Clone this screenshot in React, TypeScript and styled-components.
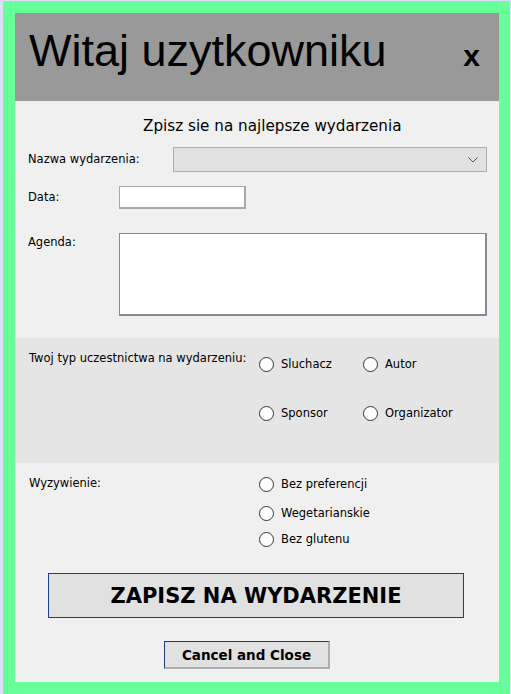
import React from "react";
import styled, { createGlobalStyle } from "styled-components";

const GlobalStyle = createGlobalStyle`
  html, body { margin: 0; padding: 0; }
  body {
    background: #dedef6;
    font-family: "DejaVu Sans", Verdana, sans-serif;
    font-size: 11.5px;
    color: #000;
    overflow: hidden;
  }
`;

const Frame = styled.div`
  margin: 1px 1px 0 3px;
  padding: 12px 11px 12px 12px;
  background: #66ff99;
`;

const Panel = styled.div`
  width: 484px;
  background: #f0f0f0;
  display: flex;
  flex-direction: column;
`;

const Header = styled.header`
  box-sizing: border-box;
  height: 88px;
  padding: 15px 19px 0 14px;
  background: #999999;
  display: flex;
  align-items: baseline;
  justify-content: space-between;
`;

const Title = styled.h1`
  margin: 0;
  font-family: "Liberation Sans", Arial, sans-serif;
  font-weight: 400;
  font-size: 45px;
  line-height: 46px;
  color: #000;
`;

const CloseX = styled.span`
  font-family: "Liberation Sans", Arial, sans-serif;
  font-weight: 700;
  font-size: 30px;
  color: #000;
  cursor: pointer;
`;

const Subtitle = styled.h2`
  margin: 16px 0 0 128px;
  height: 18px;
  font-family: "DejaVu Sans", Verdana, sans-serif;
  font-weight: 400;
  font-size: 15.2px;
  line-height: 18px;
  white-space: nowrap;
`;

const FieldRow = styled.div<{ $mt: number; $top?: boolean }>`
  margin-top: ${(p) => p.$mt}px;
  padding-left: 13px;
  display: flex;
  align-items: ${(p) => (p.$top ? "flex-start" : "center")};
`;

const Label = styled.label<{ $w: number; $pt?: number }>`
  width: ${(p) => p.$w}px;
  flex: none;
  padding-top: ${(p) => p.$pt ?? 0}px;
  line-height: 13px;
  white-space: nowrap;
`;

const Combo = styled.div`
  box-sizing: border-box;
  width: 314px;
  height: 25px;
  background: #e1e1e1;
  border: 1px solid #adadad;
  display: flex;
  align-items: center;
  justify-content: flex-end;
  padding-right: 8px;
`;

const TextInput = styled.div<{ $w: number; $h: number; $border: string }>`
  box-sizing: border-box;
  width: ${(p) => p.$w}px;
  height: ${(p) => p.$h}px;
  background: #ffffff;
  border: 1px solid ${(p) => p.$border};
  border-right-width: 2px;
  border-bottom-width: 2px;
`;

const ShadedSection = styled.section`
  margin-top: 22px;
  box-sizing: border-box;
  height: 125px;
  padding: 14px 0 0 14px;
  background: #e5e5e5;
  display: flex;
  align-items: flex-start;
`;

const PlainSection = styled.section`
  box-sizing: border-box;
  padding: 14px 0 0 14px;
  display: flex;
  align-items: flex-start;
`;

const SectionLabel = styled.div`
  width: 230px;
  flex: none;
  line-height: 13px;
  white-space: nowrap;
`;

const RadioGrid = styled.div`
  padding-top: 5px;
  display: grid;
  grid-template-columns: 104px auto;
  grid-auto-rows: 15px;
  align-content: start;
  row-gap: 34px;
`;

const RadioList = styled.div`
  display: flex;
  flex-direction: column;
`;

const Option = styled.label<{ $mt?: number }>`
  margin-top: ${(p) => p.$mt ?? 0}px;
  height: 15px;
  display: flex;
  align-items: center;
  gap: 7px;
  line-height: 15px;
  white-space: nowrap;
`;

const Circle = styled.span`
  box-sizing: border-box;
  width: 15px;
  height: 15px;
  border-radius: 50%;
  border: 1px solid #333333;
  background: #ffffff;
  flex: none;
`;

const Actions = styled.div`
  margin-top: 26px;
  padding-bottom: 13px;
  display: flex;
  flex-direction: column;
  align-items: flex-start;
`;

const PrimaryButton = styled.button`
  box-sizing: border-box;
  margin-left: 33px;
  width: 416px;
  height: 45px;
  background: #e1e1e1;
  border: 1px solid #1e3c8c;
  font-family: "DejaVu Sans", Verdana, sans-serif;
  font-weight: 700;
  font-size: 21px;
  color: #000;
  padding: 0;
`;

const SecondaryButton = styled.button`
  box-sizing: border-box;
  margin: 23px 0 0 149px;
  width: 166px;
  height: 28px;
  background: #e1e1e1;
  border-style: solid;
  border-width: 1px 2px 2px 1px;
  border-color: #1e3c7a #adadad #adadad #1e3c7a;
  font-family: "DejaVu Sans", Verdana, sans-serif;
  font-weight: 700;
  font-size: 13.5px;
  color: #000;
  padding: 0;
`;

const Chevron = () => (
  <svg width="10" height="6" viewBox="0 0 10 6">
    <polyline points="0.5,0.5 5,5 9.5,0.5" fill="none" stroke="#555" strokeWidth="1" />
  </svg>
);

const Radio = ({ label, mt }: { label: string; mt?: number }) => (
  <Option $mt={mt}>
    <Circle />
    {label}
  </Option>
);

export default function App() {
  return (
    <>
      <GlobalStyle />
      <Frame>
        <Panel>
          <Header>
            <Title>Witaj uzytkowniku</Title>
            <CloseX>x</CloseX>
          </Header>
          <Subtitle>Zpisz sie na najlepsze wydarzenia</Subtitle>
          <FieldRow $mt={12}>
            <Label $w={145}>Nazwa wydarzenia:</Label>
            <Combo>
              <Chevron />
            </Combo>
          </FieldRow>
          <FieldRow $mt={14}>
            <Label $w={91}>Data:</Label>
            <TextInput $w={127} $h={23} $border="#a8a8a8" />
          </FieldRow>
          <FieldRow $mt={24} $top>
            <Label $w={91} $pt={3}>Agenda:</Label>
            <TextInput $w={368} $h={83} $border="#868a94" />
          </FieldRow>
          <ShadedSection>
            <SectionLabel>Twoj typ uczestnictwa na wydarzeniu:</SectionLabel>
            <RadioGrid>
              <Radio label="Sluchacz" />
              <Radio label="Autor" />
              <Radio label="Sponsor" />
              <Radio label="Organizator" />
            </RadioGrid>
          </ShadedSection>
          <PlainSection>
            <SectionLabel>Wyzywienie:</SectionLabel>
            <RadioList>
              <Radio label="Bez preferencji" />
              <Radio label="Wegetarianskie" mt={14} />
              <Radio label="Bez glutenu" mt={11} />
            </RadioList>
          </PlainSection>
          <Actions>
            <PrimaryButton>ZAPISZ NA WYDARZENIE</PrimaryButton>
            <SecondaryButton>Cancel and Close</SecondaryButton>
          </Actions>
        </Panel>
      </Frame>
    </>
  );
}
